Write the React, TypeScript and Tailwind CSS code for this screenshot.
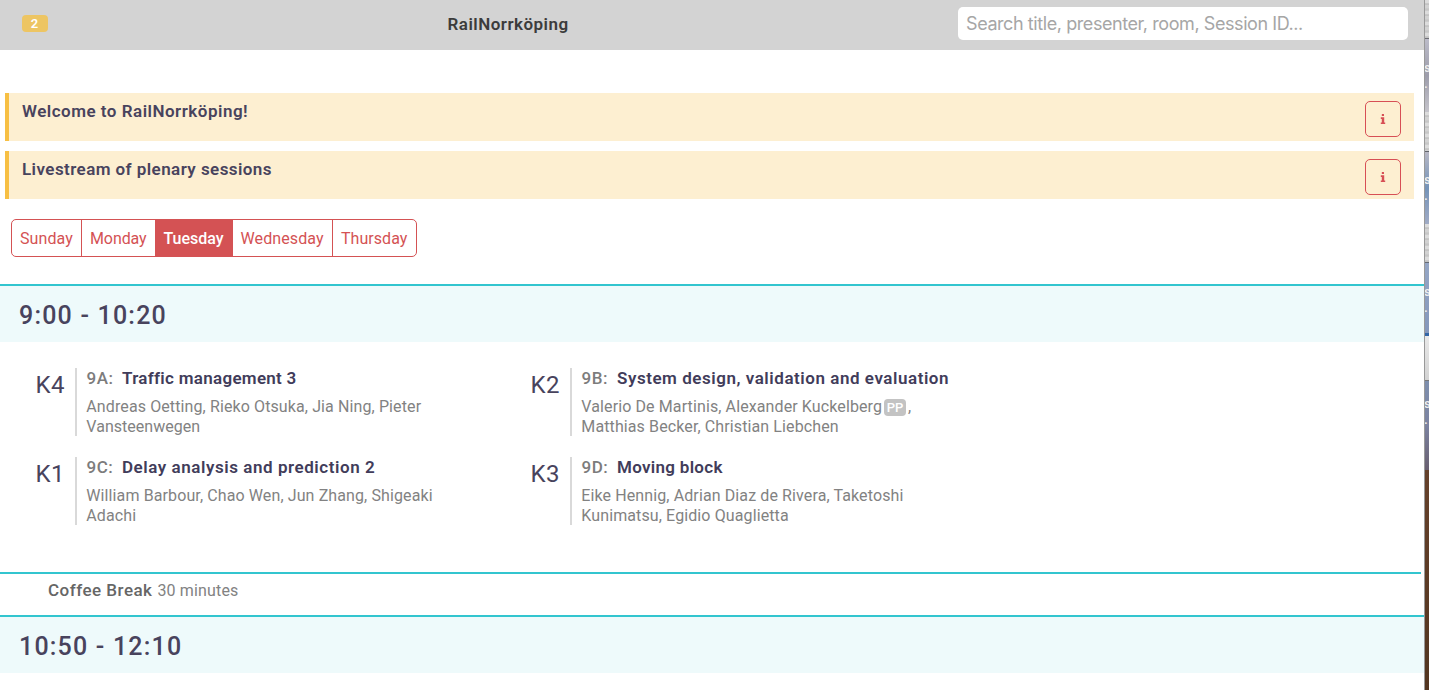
import type { ReactNode } from "react";

type Session = { room: string; id: string; title: string; titleCls: string; lines: ReactNode[] };

function Notice({ text, cls }: { text: string; cls: string }) {
  return (
    <div className="flex h-12 justify-between border-l-4 border-[#f7bf43] bg-[#fdefd1] pl-[13px] pr-[13px]">
      <h2 className={`pt-[6px] text-[17px] leading-6 font-semibold text-[#48435d] ${cls}`}>{text}</h2>
      <button className="mt-2 flex size-9 items-center justify-center rounded-[5px] border border-[#d74f55] text-[#d74f55]" aria-label="Info">
        <svg width="6" height="10" viewBox="0 0 6 10" fill="currentColor">
          <rect x="1.8" y="0" width="2.2" height="2" rx="0.3" />
          <path d="M0.8 3.3H4.2V8.4H5.2V10H0.8V8.4H1.8V4.9H0.8Z" />
        </svg>
      </button>
    </div>
  );
}

function TimeSlot({ label, cls }: { label: string; cls: string }) {
  return (
    <div className="h-[58px] border-t-2 border-[#32c5cf] bg-[#eefafb] pl-[19px]">
      <h3 className={`pt-[1px] text-[25px] leading-[57px] font-medium text-[#48435d] ${cls}`}>{label}</h3>
    </div>
  );
}

const days = [
  { name: "Sunday", cls: "w-[70px] border-r pl-2 tracking-[0.1px]" },
  { name: "Monday", cls: "w-[73px] pl-2 tracking-[-0.1px]" },
  { name: "Tuesday", cls: "w-[78px] bg-[#d45254] pl-[8.5px] font-medium text-white" },
  { name: "Wednesday", cls: "w-[100px] border-r pl-[7.5px] tracking-[0.1px]" },
  { name: "Thursday", cls: "w-[83px] pl-2 tracking-[0.05px]" },
];

const sessions: Session[] = [
  {
    room: "K4", id: "9A:", title: "Traffic management 3", titleCls: "tracking-[0.29px]",
    lines: ["Andreas Oetting, Rieko Otsuka, Jia Ning, Pieter", <span className="tracking-[0.03px]">Vansteenwegen</span>],
  },
  {
    room: "K2", id: "9B:", title: "System design, validation and evaluation", titleCls: "tracking-[0.54px]",
    lines: [
      <>
        <span>Valerio De Martinis, Alexander Kuckelberg</span>
        <span className="ml-[2px] mr-[2px] mt-[2px] flex h-[17px] w-[22px] items-center justify-center rounded bg-[#c3c3c3] text-[13px] leading-none font-medium text-white">PP</span>
        <span>,</span>
      </>,
      "Matthias Becker, Christian Liebchen",
    ],
  },
  {
    room: "K1", id: "9C:", title: "Delay analysis and prediction 2", titleCls: "tracking-[0.55px]",
    lines: ["William Barbour, Chao Wen, Jun Zhang, Shigeaki", "Adachi"],
  },
  {
    room: "K3", id: "9D:", title: "Moving block", titleCls: "tracking-[0.3px]",
    lines: ["Eike Hennig, Adrian Diaz de Rivera, Taketoshi", "Kunimatsu, Egidio Quaglietta"],
  },
];

function SessionCard({ s }: { s: Session }) {
  return (
    <article className="flex h-[68px]">
      <div className="w-10 shrink-0 pt-[1px] pl-[0.5px] text-[24px] leading-[32px] tracking-[0.4px] text-[#48435d]">{s.room}</div>
      <div className="border-l-2 border-[#d9d9d9] pl-[9px]">
        <div className="flex h-5 whitespace-nowrap text-[17px] leading-5">
          <span className="w-[36px] pl-[0.5px] font-medium tracking-[0.5px] text-[#7c7c7c]">{s.id}</span>
          <span className={`font-semibold text-[#413c5a] ${s.titleCls}`}>{s.title}</span>
        </div>
        <div className="mt-[9px] pl-[0.3px] text-[16px] leading-5 tracking-[0.11px] text-[#828282]">
          {s.lines.map((line, i) => (
            <div key={i} className="flex h-5 whitespace-nowrap">{line}</div>
          ))}
        </div>
      </div>
    </article>
  );
}

const sheet = "bg-[repeating-linear-gradient(to_bottom,#dcdcdc_0px,#dcdcdc_3px,#b5b5b5_4px,#d2d2d2_5px,#d2d2d2_8px,#c3c3c3_9px,#cfcfcf_11px)]";
const strip = [
  { cls: `h-[39px] border-b border-[#6e6e74] ${sheet}` },
  { cls: "h-[73px] bg-linear-to-b from-[#bcbcc9] via-[#9d9dab] to-[#c5c4cb] pt-[21px]", text: ["s", "."] },
  { cls: `h-[40px] border-b border-[#62656c] ${sheet}` },
  { cls: "h-[72px] bg-linear-to-b from-[#b8b8c5] via-[#7493b8] to-[#a0abc5] pt-[20px]", text: ["s", "."] },
  { cls: `h-[39px] border-b border-[#666b75] ${sheet}` },
  { cls: "h-[70px] bg-linear-to-b from-[#95a6c5] to-[#8497bb] pt-[21px]", text: ["s", "."] },
  { cls: "h-[3px] bg-[#3366a6]" },
  { cls: "h-[45px] border-b border-[#777] bg-linear-to-b from-[#e9e9e9] to-[#d3d3d3]" },
  { cls: "h-[89px] bg-linear-to-b from-[#7e8fad] via-[#7b82a0] to-[#685f70] pt-[15px]", text: ["s", "."] },
  { cls: "h-[220px] bg-linear-to-b from-[#65412b] to-[#523520]" },
];

export default function App() {
  return (
    <div className="flex h-[690px] w-[1429px] overflow-hidden bg-white font-['Roboto',sans-serif]">
      <main className="w-[1424px] shrink-0">
        <header className="grid h-[50px] grid-cols-[425.5px_510.5px_450px] items-center bg-[#d3d3d3] pl-[22px]">
          <span className="mb-[3px] flex h-[17px] w-[26px] items-center justify-center rounded bg-[#edc563] pr-px text-[13px] leading-none font-semibold text-white">2</span>
          <h1 className="pb-[2px] text-[17px] leading-6 font-semibold tracking-[0.48px] text-[#3b3b3b]">RailNorrköping</h1>
          <input
            className="mb-[3px] h-[33px] w-[450px] rounded-[5px] bg-white px-2 font-['Inter',sans-serif] text-[18px] tracking-[-0.42px] outline-none placeholder:text-[#a6a6a6]"
            placeholder="Search title, presenter, room, Session ID..."
          />
        </header>

        <section className="mt-[43px] flex flex-col gap-[10px] pl-[5px] pr-[10px]">
          <Notice text="Welcome to RailNorrköping!" cls="tracking-[0.5px]" />
          <Notice text="Livestream of plenary sessions" cls="tracking-[0.43px]" />
        </section>

        <nav className="mt-5 ml-[11px] flex h-[38px] w-[406px] overflow-hidden rounded-[5px] border border-[#d45254]">
          {days.map((d) => (
            <button key={d.name} className={`h-9 border-[#d45254] pt-px text-left text-[16px] leading-9 ${d.name === "Tuesday" ? "" : "text-[#d45254]"} ${d.cls}`}>
              {d.name}
            </button>
          ))}
        </nav>

        <div className="mt-[27px]">
          <TimeSlot label="9:00 - 10:20" cls="tracking-[1.2px]" />
        </div>
        <section className="mt-[26px] ml-[35px] grid w-[990px] grid-cols-2 gap-y-[21px]">
          {sessions.map((s) => (
            <SessionCard key={s.id} s={s} />
          ))}
        </section>

        <section className="mt-[47px] mr-[3px] flex h-[43px] gap-[5px] border-t-2 border-[#32c5cf] pl-12 leading-8">
          <span className="text-[17px] font-medium tracking-[0.48px] text-[#666]">Coffee Break</span>
          <span className="pt-px text-[16px] tracking-[0.15px] text-[#828282]">30 minutes</span>
        </section>
        <TimeSlot label="10:50 - 12:10" cls="tracking-[1.2px]" />
      </main>

      <aside className="flex w-[5px] shrink-0 flex-col overflow-hidden border-l border-black/40">
        {strip.map((b, i) => (
          <div key={i} className={`shrink-0 overflow-hidden text-[13px] leading-[16px] font-semibold text-[#eee] ${b.cls}`}>
            {b.text?.map((t) => <div key={t} className="-ml-px">{t}</div>)}
          </div>
        ))}
      </aside>
    </div>
  );
}
